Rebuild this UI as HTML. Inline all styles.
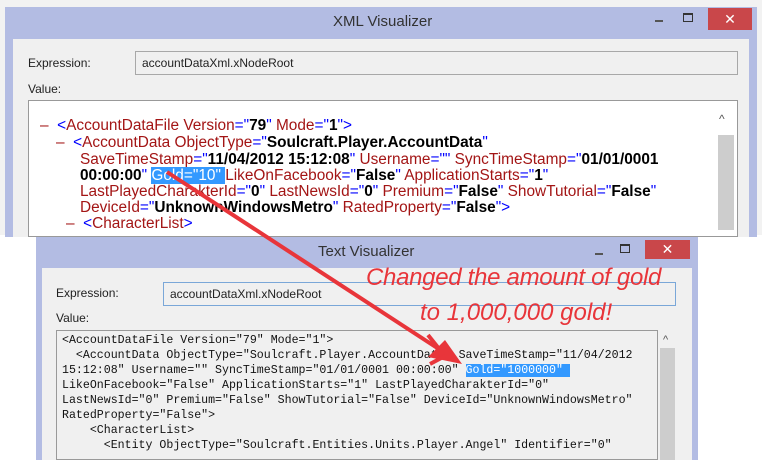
<!DOCTYPE html>
<html><head><meta charset="utf-8"><style>
*{margin:0;padding:0;box-sizing:border-box}
body{width:762px;height:460px;overflow:hidden;background:#fff;position:relative;font-family:"Liberation Sans",sans-serif}
.abs{position:absolute}
.win{position:absolute;background:#b3bce3;}
.panel{position:absolute;background:#f0f0f0}
.title{position:absolute;font-size:15px;color:#333}
.close{position:absolute;background:#c9474a;color:#fff;font-size:14px;text-align:center}
.box{position:absolute;border:1px solid #a8a8a8;background:#f0f0f0;font-size:12px;padding:4px 6px;color:#222}
.lbl{position:absolute;font-size:12px;color:#222}
.ta{position:absolute;background:#fff;border:1px solid #999;overflow:hidden}
.xl{position:absolute;font-size:15.4px;line-height:17px;white-space:pre;color:#a31515}
.xl .b{color:#00f}.xl .k{color:#000;font-weight:bold}
.mono{position:absolute;font-family:"Liberation Mono",monospace;font-size:11.6px;line-height:15px;white-space:pre;color:#111}
.sel{background:#3399ff;color:#fff}
.sb{position:absolute;background:#cdcdcd}
</style></head><body>
<div class="abs" style="left:0;top:0;width:762px;height:235px;background:#f2f2f2"></div>
<div class="win" style="left:5px;top:7px;width:752px;height:230px"></div>
<div class="title" style="left:333px;top:13px">XML Visualizer</div>
<div class="abs" style="left:655px;top:20px;width:8px;height:2px;background:#555"></div>
<div class="abs" style="left:683px;top:13px;width:10px;height:9px;border:1px solid #333;border-top-width:2px"></div>
<div class="close" style="left:708px;top:8px;width:44px;height:22px;line-height:22px">✕</div>
<div class="panel" style="left:13px;top:39px;width:736px;height:198px"></div>
<div class="lbl" style="left:28px;top:56px">Expression:</div>
<div class="box" style="left:135px;top:51px;width:603px;height:24px">accountDataXml.xNodeRoot</div>
<div class="lbl" style="left:28px;top:82px">Value:</div>
<div class="ta" style="left:28px;top:100px;width:710px;height:137px"></div>
<div class="sb" style="left:718px;top:135px;width:16px;height:95px"></div>
<div class="abs" style="left:719px;top:112px;font-size:12px;color:#555">^</div>
<div class="xl" style="left:40px;top:117px">–  <span class="b">&lt;</span>AccountDataFile Version<span class="b">="</span><span class="k">79</span><span class="b">"</span> Mode<span class="b">="</span><span class="k">1</span><span class="b">"&gt;</span></div>
<div class="xl" style="left:56px;top:134px">–  <span class="b">&lt;</span>AccountData ObjectType<span class="b">="</span><span class="k">Soulcraft.Player.AccountData</span><span class="b">"</span></div>
<div class="xl" style="left:80px;top:151px">SaveTimeStamp<span class="b">="</span><span class="k">11/04/2012 15:12:08</span><span class="b">"</span> Username<span class="b">=""</span> SyncTimeStamp<span class="b">="</span><span class="k">01/01/0001</span></div>
<div class="xl" style="left:80px;top:167px"><span class="k">00:00:00</span><span class="b">"</span> <span class="sel">Gold="10" </span>LikeOnFacebook<span class="b">="</span><span class="k">False</span><span class="b">"</span> ApplicationStarts<span class="b">="</span><span class="k">1</span><span class="b">"</span></div>
<div class="xl" style="left:80px;top:183px">LastPlayedCharakterId<span class="b">="</span><span class="k">0</span><span class="b">"</span> LastNewsId<span class="b">="</span><span class="k">0</span><span class="b">"</span> Premium<span class="b">="</span><span class="k">False</span><span class="b">"</span> ShowTutorial<span class="b">="</span><span class="k">False</span><span class="b">"</span></div>
<div class="xl" style="left:80px;top:199px">DeviceId<span class="b">="</span><span class="k">UnknownWindowsMetro</span><span class="b">"</span> RatedProperty<span class="b">="</span><span class="k">False</span><span class="b">"&gt;</span></div>
<div class="xl" style="left:66px;top:215px">–  <span class="b">&lt;</span>CharacterList<span class="b">&gt;</span></div>

<div class="win" style="left:36px;top:237px;width:662px;height:223px"></div>
<div class="title" style="left:318px;top:243px">Text Visualizer</div>
<div class="abs" style="left:595px;top:253px;width:8px;height:2px;background:#555"></div>
<div class="abs" style="left:620px;top:244px;width:10px;height:9px;border:1px solid #333;border-top-width:2px"></div>
<div class="close" style="left:645px;top:240px;width:45px;height:19px;line-height:19px">✕</div>
<div class="panel" style="left:42px;top:268px;width:650px;height:192px"></div>
<div class="lbl" style="left:56px;top:286px">Expression:</div>
<div class="box" style="left:163px;top:282px;width:513px;height:24px;border-color:#7aa7d8">accountDataXml.xNodeRoot</div>
<div class="lbl" style="left:56px;top:311px">Value:</div>
<div class="ta" style="left:56px;top:330px;width:602px;height:130px;background:#f0f0f0"></div>
<div class="sb" style="left:660px;top:348px;width:15px;height:112px"></div>
<div class="abs" style="left:663px;top:334px;font-size:11px;color:#555">^</div>
<div class="mono" style="left:62px;top:333px">&lt;AccountDataFile Version="79" Mode="1"&gt;
  &lt;AccountData ObjectType="Soulcraft.Player.AccountData" SaveTimeStamp="11/04/2012
15:12:08" Username="" SyncTimeStamp="01/01/0001 00:00:00" <span class="sel">Gold="1000000" </span>
LikeOnFacebook="False" ApplicationStarts="1" LastPlayedCharakterId="0"
LastNewsId="0" Premium="False" ShowTutorial="False" DeviceId="UnknownWindowsMetro"
RatedProperty="False"&gt;
    &lt;CharacterList&gt;
      &lt;Entity ObjectType="Soulcraft.Entities.Units.Player.Angel" Identifier="0"</div>

<svg class="abs" style="left:0;top:0" width="762" height="460">
<line x1="167" y1="172" x2="448" y2="355" stroke="#e8353a" stroke-width="4"/>
<polygon points="462,364 428,357 445,340" fill="#e8353a"/>
<line x1="440" y1="350" x2="428" y2="335" stroke="#e8353a" stroke-width="4"/>
<line x1="445" y1="356" x2="430" y2="364" stroke="#e8353a" stroke-width="4"/>
</svg>
<div class="abs" style="left:366px;top:264px;font-size:24px;color:#e8353a;font-style:italic;letter-spacing:-0.3px">Changed the amount of gold</div>
<div class="abs" style="left:420px;top:299px;font-size:24px;color:#e8353a;font-style:italic">to 1,000,000 gold!</div>
</body></html>
